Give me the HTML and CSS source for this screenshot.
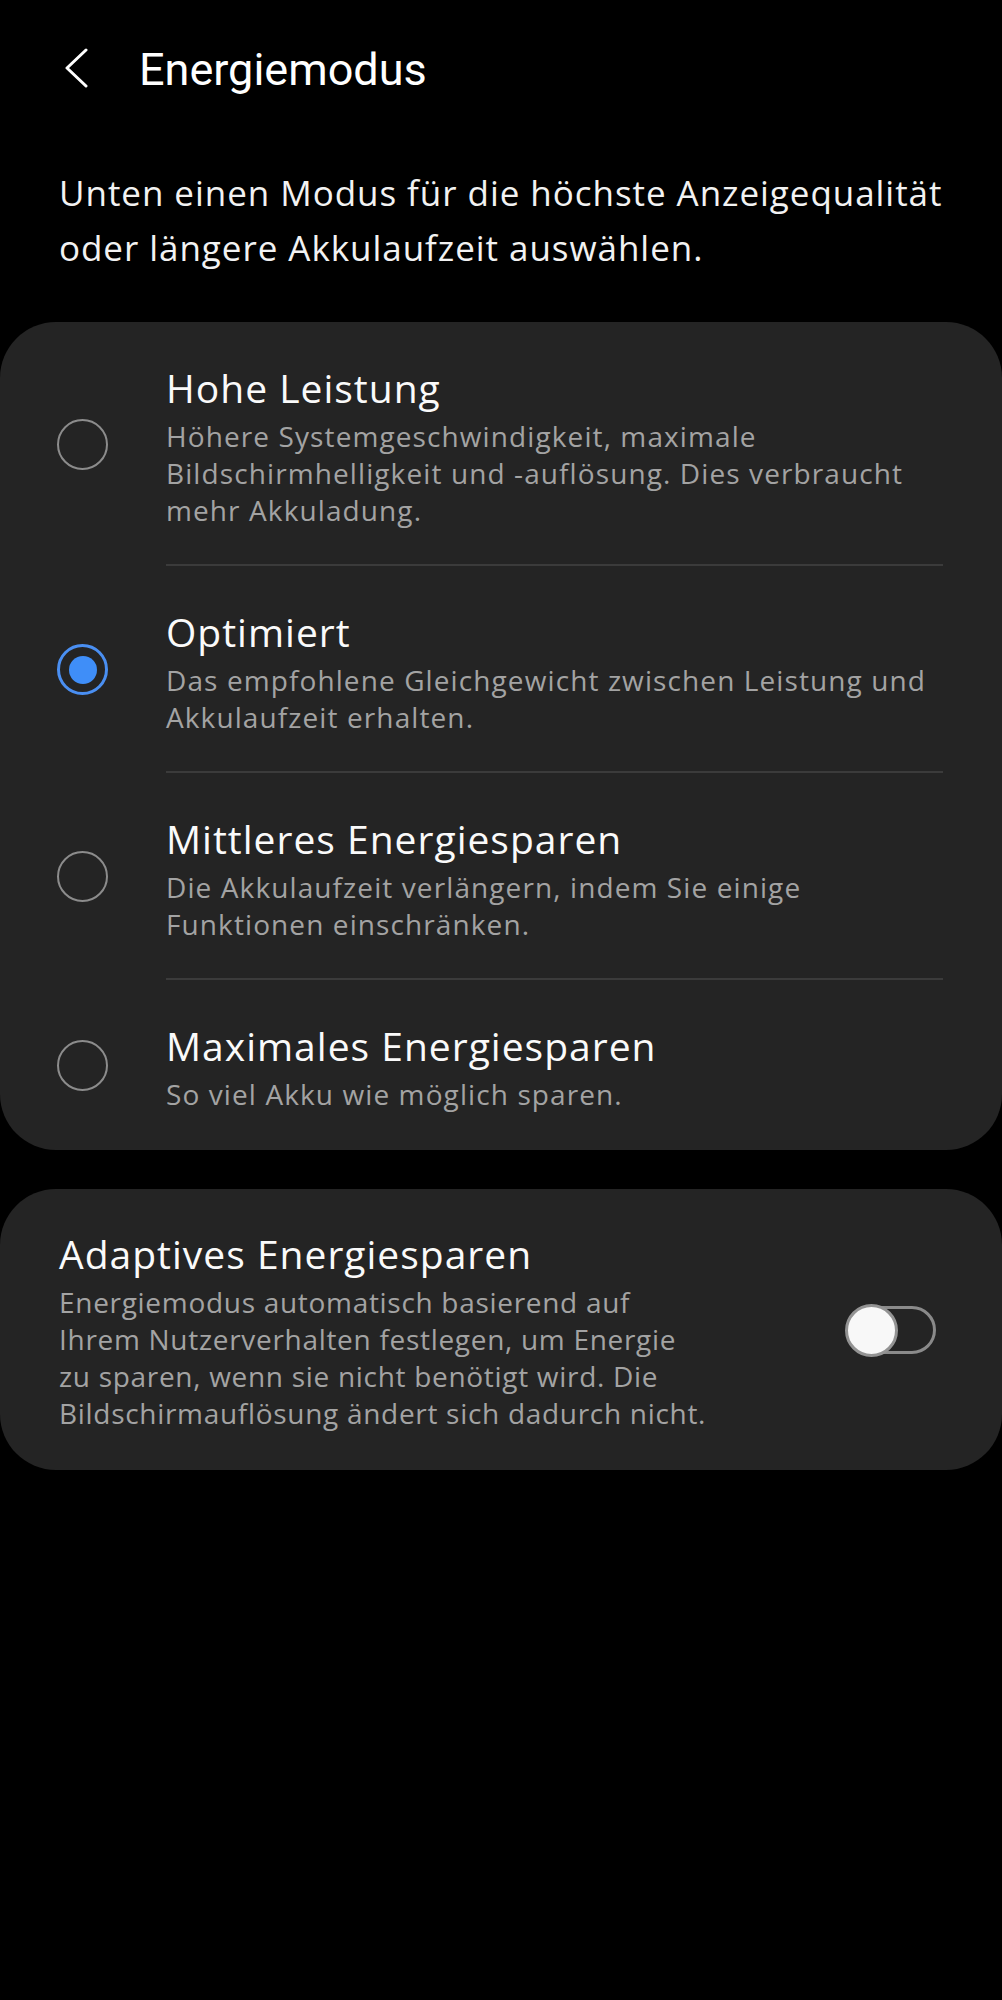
FILE: index.html
```html
<!DOCTYPE html>
<html lang="de">
<head>
<meta charset="utf-8">
<title>Energiemodus</title>
<link rel="stylesheet" href="styles.css">
</head>
<body>
<div class="screen">
  <header class="appbar">
    <button class="back" aria-label="Zurück">
      <svg width="26" height="40" viewBox="0 0 26 40"><path d="M23 2 L4 20 L23 38" fill="none" stroke="#ffffff" stroke-width="3" stroke-linecap="round" stroke-linejoin="round"/></svg>
    </button>
    <h1 class="title">Energiemodus</h1>
  </header>

  <p class="intro">Unten einen Modus für die höchste Anzeigequalität oder längere Akkulaufzeit auswählen.</p>

  <section class="card">
    <div class="option">
      <div class="radio-col"><span class="radio"></span></div>
      <div class="text-col">
        <div class="opt-title">Hohe Leistung</div>
        <div class="opt-desc">Höhere Systemgeschwindigkeit, maximale Bildschirmhelligkeit und -auflösung. Dies verbraucht mehr Akkuladung.</div>
      </div>
    </div>
    <div class="option">
      <div class="radio-col"><span class="radio checked"></span></div>
      <div class="text-col">
        <div class="opt-title">Optimiert</div>
        <div class="opt-desc">Das empfohlene Gleichgewicht zwischen Leistung und Akkulaufzeit erhalten.</div>
      </div>
    </div>
    <div class="option">
      <div class="radio-col"><span class="radio"></span></div>
      <div class="text-col">
        <div class="opt-title">Mittleres Energiesparen</div>
        <div class="opt-desc">Die Akkulaufzeit verlängern, indem Sie einige Funktionen einschränken.</div>
      </div>
    </div>
    <div class="option">
      <div class="radio-col"><span class="radio"></span></div>
      <div class="text-col">
        <div class="opt-title">Maximales Energiesparen</div>
        <div class="opt-desc">So viel Akku wie möglich sparen.</div>
      </div>
    </div>
  </section>

  <section class="card switch-card">
    <div class="switch-text">
      <div class="opt-title">Adaptives Energiesparen</div>
      <div class="opt-desc">Energiemodus automatisch basierend auf<br>Ihrem Nutzerverhalten festlegen, um Energie<br>zu sparen, wenn sie nicht benötigt wird. Die<br>Bildschirmauflösung ändert sich dadurch nicht.</div>
    </div>
    <div class="toggle"><span class="track"></span><span class="thumb"></span></div>
  </section>
</div>
</body>
</html>
```

FILE: styles.css
```css
html, body {
  margin: 0;
  padding: 0;
  background: #000000;
}

body {
  font-family: "Open Sans", "Noto Sans", "Liberation Sans", sans-serif;
  color: #fafafa;
  width: 1002px;
  min-height: 2000px;
}

.screen {
  display: flex;
  flex-direction: column;
}

.appbar {
  height: 140px;
  display: flex;
  align-items: center;
}

.back {
  background: none;
  border: none;
  padding: 0;
  margin: 0 0 4px 63px;
  width: 26px;
  height: 40px;
  display: flex;
}

.title {
  margin: 0 0 0 50px;
  font-family: Roboto, "Open Sans", sans-serif;
  font-size: 45px;
  font-weight: 400;
  line-height: 60px;
  color: #ffffff;
}

.intro {
  margin: 25px 40px 47px 59px;
  font-size: 35px;
  line-height: 55px;
  letter-spacing: 0.95px;
  color: #f2f2f2;
}

.card {
  background: #242424;
  border-radius: 56px;
}

.option {
  display: flex;
  align-items: center;
}

.radio-col {
  width: 166px;
  flex: none;
  display: flex;
}

.radio {
  box-sizing: border-box;
  width: 51px;
  height: 51px;
  margin-left: 57px;
  border: 2px solid #8c8c8c;
  border-radius: 50%;
  display: flex;
  align-items: center;
  justify-content: center;
}

.radio.checked {
  border: 3px solid #4a8ff2;
}

.radio.checked::after {
  content: "";
  width: 28px;
  height: 28px;
  border-radius: 50%;
  background: #3f8ef8;
}

.text-col {
  flex: 1;
  margin-right: 59px;
  padding: 41px 0 35px 0;
  border-bottom: 2px solid #3b3b3b;
}

.option:last-child .text-col {
  border-bottom: none;
  padding-bottom: 37px;
}

.opt-title {
  font-size: 39px;
  line-height: 50px;
  letter-spacing: 1px;
  color: #fafafa;
  margin-bottom: 5px;
}

.opt-desc {
  font-size: 28px;
  line-height: 37px;
  letter-spacing: 1.1px;
  color: #a3a3a3;
}

.switch-card {
  margin-top: 39px;
  display: flex;
  align-items: center;
  padding: 40px 66px 38px 59px;
}

.switch-text {
  width: 700px;
  flex: none;
}

.switch-text .opt-desc {
  letter-spacing: 0.7px;
}

.toggle {
  margin-left: auto;
  position: relative;
  width: 91px;
  height: 53px;
  flex: none;
}

.track {
  position: absolute;
  left: 10px;
  right: 0;
  top: 2px;
  bottom: 3px;
  box-sizing: border-box;
  border: 3px solid #8a8a8a;
  border-radius: 24px;
}

.thumb {
  position: absolute;
  left: 0;
  top: 0;
  box-sizing: border-box;
  width: 53px;
  height: 53px;
  border-radius: 50%;
  background: #f8f8f8;
  border: 3px solid #939393;
}
```
